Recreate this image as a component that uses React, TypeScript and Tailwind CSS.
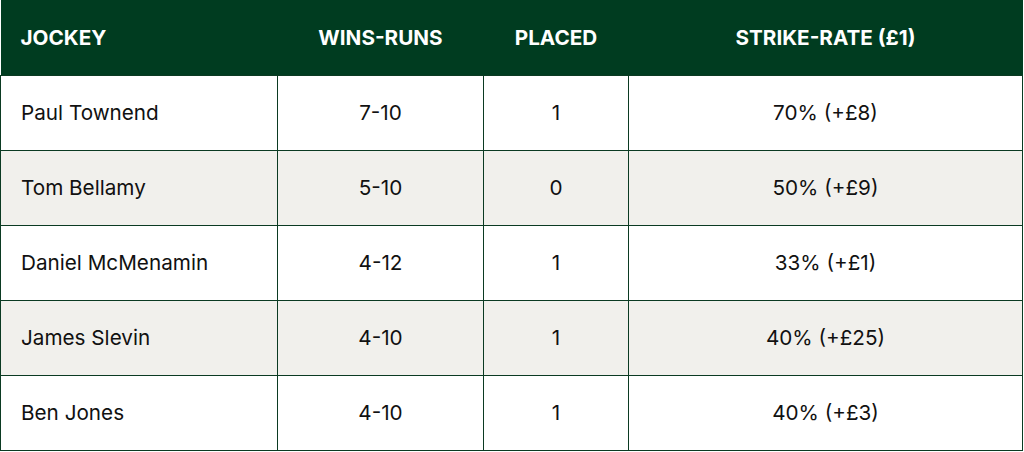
const rows = [
  { jockey: "Paul Townend", winsRuns: "7-10", placed: "1", strike: "70% (+£8)" },
  { jockey: "Tom Bellamy", winsRuns: "5-10", placed: "0", strike: "50% (+£9)" },
  { jockey: "Daniel McMenamin", winsRuns: "4-12", placed: "1", strike: "33% (+£1)" },
  { jockey: "James Slevin", winsRuns: "4-10", placed: "1", strike: "40% (+£25)" },
  { jockey: "Ben Jones", winsRuns: "4-10", placed: "1", strike: "40% (+£3)" },
];

export default function App() {
  return (
    <div className="bg-white font-['Inter',sans-serif]">
      <table className="w-[1023px] table-fixed border-collapse text-left text-[20.7px] text-[#111]">
        <colgroup>
          <col className="w-[277px]" />
          <col className="w-[206px]" />
          <col className="w-[145px]" />
          <col />
        </colgroup>
        <thead className="bg-[#003c20] text-white">
          <tr className="h-[75px]">
            <th className="px-5 font-bold">JOCKEY</th>
            <th className="text-center font-bold">WINS-RUNS</th>
            <th className="text-center font-bold">PLACED</th>
            <th className="text-center font-bold">STRIKE-RATE (£1)</th>
          </tr>
        </thead>
        <tbody>
          {rows.map((row, i) => (
            <tr
              key={row.jockey}
              className={`h-[75px] ${i % 2 === 1 ? "bg-[#f1f0ec]" : "bg-white"}`}
            >
              <td className="border border-[#0b3a22] px-5">{row.jockey}</td>
              <td className="border border-[#0b3a22] text-center">{row.winsRuns}</td>
              <td className="border border-[#0b3a22] text-center">{row.placed}</td>
              <td className="border border-[#0b3a22] text-center">{row.strike}</td>
            </tr>
          ))}
        </tbody>
      </table>
    </div>
  );
}
